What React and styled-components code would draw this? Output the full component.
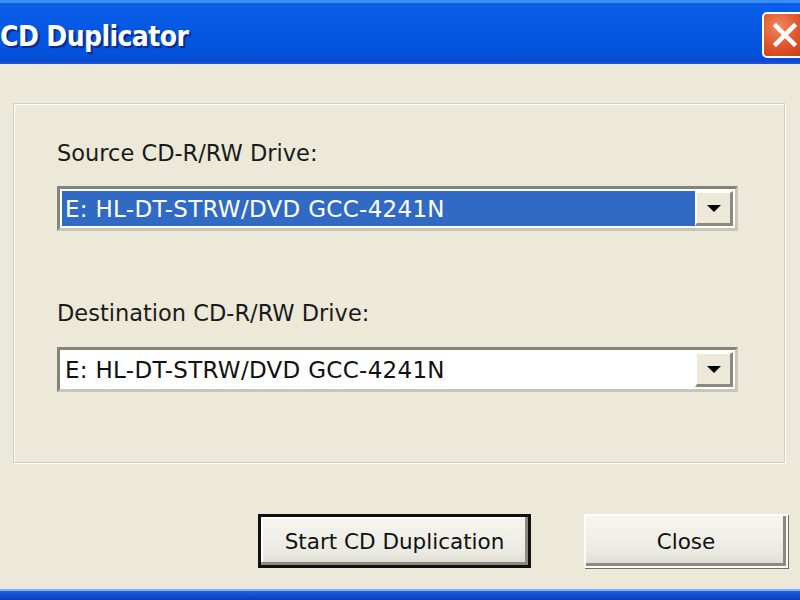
import { createGlobalStyle, styled } from "styled-components";

const Global = createGlobalStyle`
  html, body { margin: 0; padding: 0; background: #ece9d8; }
  body { width: 800px; height: 600px; overflow: hidden; }
`;

const Window = styled.div`
  width: 800px;
  height: 600px;
  display: flex;
  flex-direction: column;
  background: #ece9d8;
  overflow: hidden;
  font-family: "DejaVu Sans", Verdana, sans-serif;
`;

const TitleBar = styled.div`
  height: 64px;
  flex: none;
  display: flex;
  align-items: center;
  justify-content: space-between;
  box-sizing: border-box;
  border-top: 3px solid #3d8cf6;
  border-bottom: 2px solid #1d52d6;
  background: linear-gradient(180deg, #0a5fe8 0%, #0558e3 40%, #0352dc 80%, #0a4ad0 100%);
`;

const Title = styled.div`
  margin-top: 7px;
  color: #fff;
  font-family: "DejaVu Sans Condensed", "DejaVu Sans", sans-serif;
  font-weight: bold;
  font-size: 28px;
  letter-spacing: -0.6px;
  text-shadow: 2px 2px 1px #0a2a8c;
`;

const CloseBox = styled.div`
  width: 46px;
  height: 46px;
  margin-right: -8px;
  margin-top: 4px;
  box-sizing: border-box;
  border: 2px solid #fff;
  border-radius: 5px;
  background: radial-gradient(circle at 35% 30%, #f08a5e 0%, #e2552c 50%, #c23a14 100%);
  display: flex;
  align-items: center;
  justify-content: center;
`;

const Body = styled.div`
  flex: 1;
  display: flex;
  flex-direction: column;
  padding: 39px 15px 0 13px;
`;

const Group = styled.div`
  height: 360px;
  box-sizing: border-box;
  border: 1px solid #d0d0bf;
  box-shadow: inset 1px 1px 0 #fff, 1px 1px 0 #fff;
  padding: 36px 44px 0 43px;
  display: flex;
  flex-direction: column;
`;

const Label = styled.div`
  font-size: 22.5px;
  color: #1a1a1a;
  height: 27px;
  line-height: 27px;
  margin-bottom: ${(p) => p.$gap}px;
`;

const Combo = styled.div`
  height: 45px;
  width: 681px;
  box-sizing: border-box;
  display: flex;
  border-top: 3px solid #848478;
  border-left: 3px solid #848478;
  border-right: 3px solid #c6c6bc;
  border-bottom: 3px solid #c6c6bc;
  background: #fff;
  padding: 2px;
  margin-bottom: ${(p) => p.$gap}px;
`;

const ComboText = styled.div`
  flex: 1;
  display: flex;
  align-items: center;
  padding-left: 3px;
  font-size: 23px;
  letter-spacing: 0.3px;
  color: ${(p) => (p.$selected ? "#fff" : "#111")};
  background: ${(p) => (p.$selected ? "#316ac5" : "#fff")};
`;

const DropButton = styled.div`
  width: 38px;
  box-sizing: border-box;
  background: #ece9d8;
  border-top: 2px solid #fff;
  border-left: 2px solid #fff;
  border-right: 3px solid #8a8a80;
  border-bottom: 3px solid #8a8a80;
  display: flex;
  align-items: center;
  justify-content: center;
`;

const Arrow = styled.div`
  width: 0;
  height: 0;
  border-left: 7px solid transparent;
  border-right: 7px solid transparent;
  border-top: 7px solid #000;
`;

const ButtonRow = styled.div`
  display: flex;
  justify-content: flex-end;
  gap: 53px;
  margin-top: 51px;
`;

const Button = styled.div`
  width: ${(p) => p.$w}px;
  height: 54px;
  box-sizing: border-box;
  display: flex;
  align-items: center;
  justify-content: center;
  font-size: 21.5px;
  color: #111;
  background: linear-gradient(180deg, #f6f5ef 0%, #ecebe3 70%, #dddbd0 100%);
  border: ${(p) => (p.$default ? "3px solid #111" : "2px solid #fff")};
  box-shadow: ${(p) =>
    p.$default
      ? "inset -3px -3px 0 #8c8a80, inset 2px 2px 0 #fff"
      : "inset -3px -3px 0 #8c8a80, 1px 1px 0 #6f6f66"};
  margin-right: ${(p) => p.$mr || 0}px;
`;

const BottomEdge = styled.div`
  height: 9px;
  flex: none;
  border-top: 2px solid #7fb1f5;
  background: linear-gradient(180deg, #1f5fe0 0%, #0a3dc0 100%);
`;

export default function App() {
  const drive = "E: HL-DT-STRW/DVD GCC-4241N";
  return (
    <>
      <Global />
      <Window>
        <TitleBar>
          <Title>CD Duplicator</Title>
          <CloseBox>
            <svg width="26" height="26" viewBox="0 0 26 26">
              <path d="M4 4 L22 22 M22 4 L4 22" stroke="#fff" strokeWidth="4.5" strokeLinecap="square" />
            </svg>
          </CloseBox>
        </TitleBar>
        <Body>
          <Group>
            <Label $gap={19}>Source CD-R/RW Drive:</Label>
            <Combo $gap={69}>
              <ComboText $selected>{drive}</ComboText>
              <DropButton><Arrow /></DropButton>
            </Combo>
            <Label $gap={20}>Destination CD-R/RW Drive:</Label>
            <Combo>
              <ComboText>{drive}</ComboText>
              <DropButton><Arrow /></DropButton>
            </Combo>
          </Group>
          <ButtonRow>
            <Button $w={273} $default>Start CD Duplication</Button>
            <Button $w={204} $mr={-3}>Close</Button>
          </ButtonRow>
        </Body>
        <BottomEdge />
      </Window>
    </>
  );
}
